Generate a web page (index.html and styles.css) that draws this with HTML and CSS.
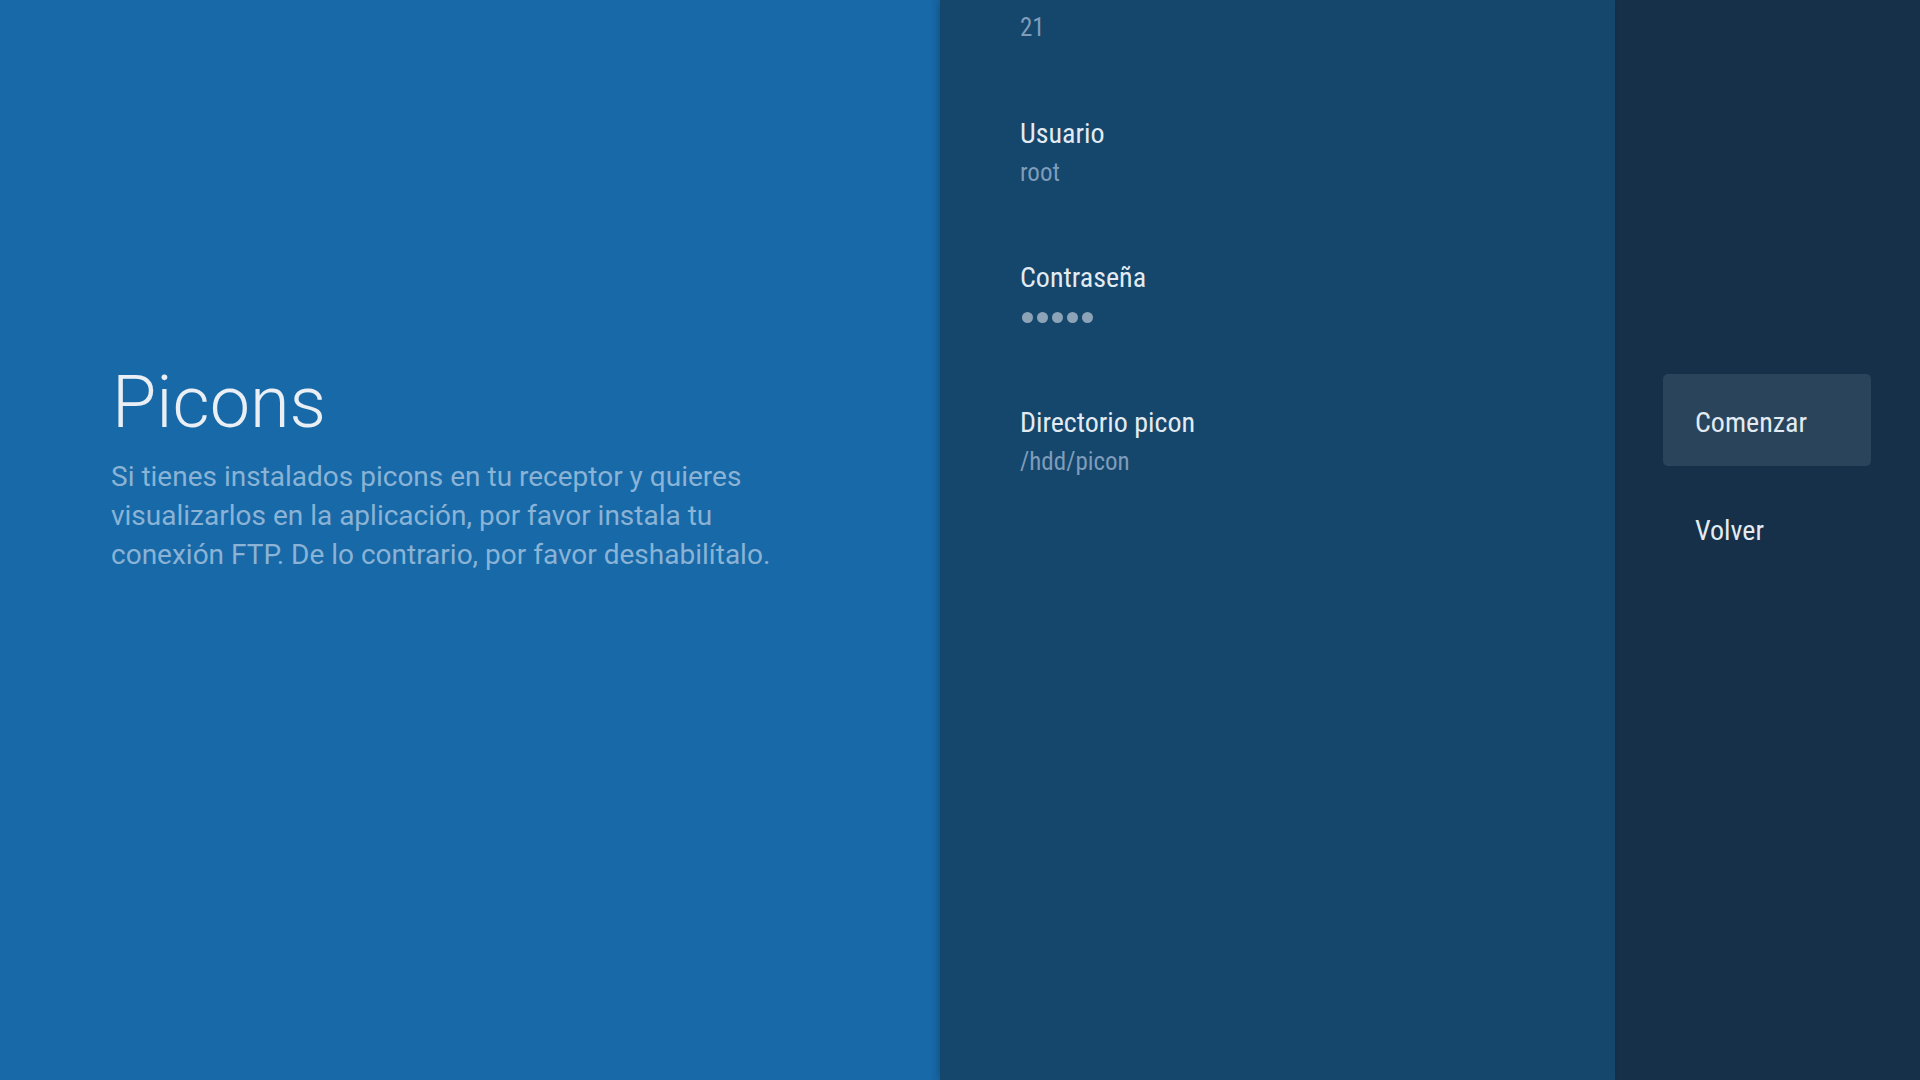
FILE: index.html
```html
<!DOCTYPE html>
<html lang="es">
<head>
<meta charset="utf-8">
<title>Picons</title>
<link rel="stylesheet" href="styles.css">
</head>
<body>
<div class="screen">
  <section class="guidance">
    <h1 class="guidance-title">Picons</h1>
    <p class="guidance-desc">Si tienes instalados picons en tu receptor y quieres visualizarlos en la aplicación, por favor instala tu conexión FTP. De lo contrario, por favor deshabilítalo.</p>
  </section>
  <section class="settings">
    <ul class="settings-list">
      <li class="setting">
        <span class="setting-label">Puerto</span>
        <span class="setting-value">21</span>
      </li>
      <li class="setting">
        <span class="setting-label">Usuario</span>
        <span class="setting-value">root</span>
      </li>
      <li class="setting">
        <span class="setting-label">Contraseña</span>
        <span class="setting-value dots"><i></i><i></i><i></i><i></i><i></i></span>
      </li>
      <li class="setting">
        <span class="setting-label">Directorio picon</span>
        <span class="setting-value">/hdd/picon</span>
      </li>
    </ul>
  </section>
  <section class="actions">
    <div class="action focused">Comenzar</div>
    <div class="action">Volver</div>
  </section>
</div>
</body>
</html>
```

FILE: styles.css
```css
* { box-sizing: border-box; }
html, body {
  margin: 0;
  padding: 0;
  width: 1920px;
  height: 1080px;
  overflow: hidden;
  font-family: Roboto, "Noto Sans", "Liberation Sans", sans-serif;
}
.screen {
  display: flex;
  width: 1920px;
  height: 1080px;
}
.guidance {
  width: 940px;
  flex: none;
  background: #1869a8;
  padding: 362px 0 0 111px;
}
.guidance-title {
  margin: 0 0 0 1px;
  font-size: 72px;
  font-weight: 300;
  line-height: 82px;
  color: #e9eff5;
}
.guidance-desc {
  margin: 14px 0 0;
  max-width: 690px;
  font-size: 28px;
  font-weight: 400;
  line-height: 38.8px;
  color: #8ab3d5;
}
.settings {
  width: 675px;
  flex: none;
  background: #15466b;
  position: relative;
  z-index: 1;
  box-shadow: -3px 0 6px rgba(0, 0, 0, 0.18);
  overflow: hidden;
  padding-left: 80px;
}
.settings-list {
  list-style: none;
  margin: -28.6px 0 0;
  padding: 0;
  display: flex;
  flex-direction: column;
  gap: 72.5px;
}
.setting {
  display: flex;
  flex-direction: column;
  align-items: flex-start;
  gap: 6px;
}
.setting-label,
.setting-value,
.action {
  font-stretch: 87.5%;
}
.setting-label {
  font-size: 28px;
  line-height: 36px;
  color: #e3ebf2;
}
.setting-value {
  font-size: 25px;
  line-height: 30px;
  color: #7f9dba;
}
.dots {
  display: flex;
  align-items: center;
  gap: 4px;
  height: 30px;
  padding-left: 2px;
}
.dots i {
  display: block;
  width: 11px;
  height: 11px;
  border-radius: 50%;
  background: #8da3b8;
}
.actions {
  flex: 1;
  background: #163049;
  padding: 374px 49px 0 48px;
  display: flex;
  flex-direction: column;
  gap: 16px;
}
.action {
  height: 92px;
  padding: 31px 33px 25px 32px;
  font-size: 28px;
  line-height: 36px;
  color: #e3ebf2;
  border-radius: 5px;
}
.action.focused {
  background: #2a445b;
}
```
